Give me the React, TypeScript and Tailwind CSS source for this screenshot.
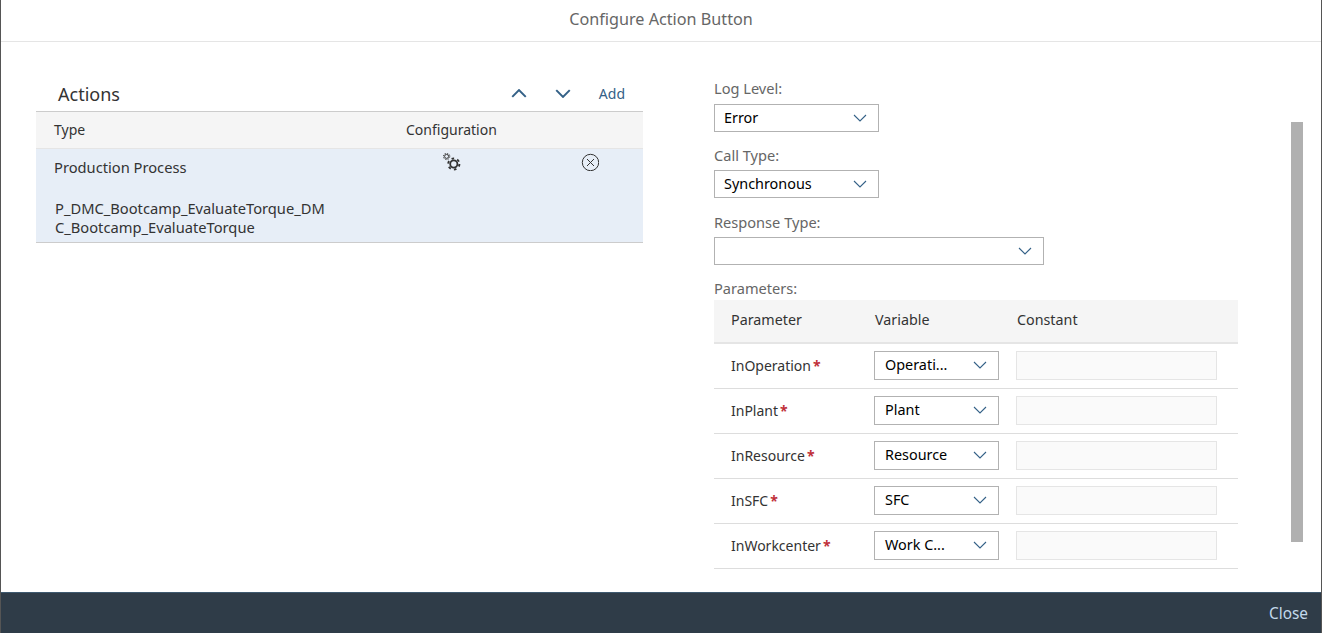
const font = "font-['Noto_Sans',sans-serif]";

type Param = { name: string; variable: string };

const params: Param[] = [
  { name: "InOperation", variable: "Operati..." },
  { name: "InPlant", variable: "Plant" },
  { name: "InResource", variable: "Resource" },
  { name: "InSFC", variable: "SFC" },
  { name: "InWorkcenter", variable: "Work C..." },
];

function Chevron({ className, weight = 1.1 }: { className: string; weight?: number }) {
  return (
    <svg viewBox="0 0 14 8" fill="none" className={className}>
      <path d="M1 1l6 6 6-6" stroke="currentColor" strokeWidth={weight} />
    </svg>
  );
}

function SelectBox({ value, width, height = "h-7", pad = "pl-[9px]" }: { value: string; width: string; height?: string; pad?: string }) {
  return (
    <div className={`flex ${height} ${width} ${pad} items-center justify-between border border-[#b2b2b2] bg-white pr-[11px] text-[14.4px] text-black`}>
      <span>{value}</span>
      <Chevron className="h-2 w-3.5 text-[#346187]" />
    </div>
  );
}

function Gears() {
  return (
    <svg viewBox="0 0 18 18" fill="none" className="h-[18px] w-[18px] text-[#333]">
      <circle cx="3.6" cy="3.4" r="2" stroke="currentColor" strokeWidth="1" />
      <circle cx="3.6" cy="3.4" r="3.2" stroke="currentColor" strokeWidth="1" strokeDasharray="1.26 1.25" />
      <circle cx="10.8" cy="11" r="3.6" stroke="currentColor" strokeWidth="1.8" />
      <circle cx="10.8" cy="11" r="5.6" stroke="currentColor" strokeWidth="1.9" strokeDasharray="2.6 3.26" />
    </svg>
  );
}

function FieldLabel({ children }: { children: string }) {
  return <div className="text-[14.6px] leading-5 text-[#666]">{children}</div>;
}

export default function App() {
  return (
    <div className={`${font} flex h-[633px] w-[1322px] flex-col overflow-hidden border-x border-[#555] bg-white`}>
      <header className="flex h-[42px] shrink-0 items-center justify-center border-b border-[#e5e5e5] pb-[3px] text-[16.2px] text-[#666]">
        Configure Action Button
      </header>

      <main className="flex min-h-0 flex-1">
        <section className="ml-[35px] mt-[36px] w-[607px] shrink-0">
          <div className="flex h-[33px] items-center justify-between pb-0.5 pl-[22px] pr-[18px]">
            <h2 className="text-lg leading-6 text-[#333]">Actions</h2>
            <div className="flex items-center text-[#346187]">
              <Chevron className="h-[9px] w-4 rotate-180" weight={1.8} />
              <Chevron className="ml-[28px] h-[9px] w-4" weight={1.8} />
              <span className="ml-[28px] text-sm">Add</span>
            </div>
          </div>
          <div className="flex h-[38px] items-center border-y border-[#cccccc] border-b-[#e5e5e5] bg-[#f5f5f5] text-sm text-[#333]">
            <span className="ml-[18px] w-[352px]">Type</span>
            <span>Configuration</span>
          </div>
          <div className="relative h-[94px] border-b border-[#cccccc] bg-[#e7eef7] text-[14.7px] text-[#333]">
            <div className="pl-[18px] pt-[8px] leading-5">Production Process</div>
            <div className="w-[295px] break-all pl-[19px] pt-[22px] leading-[19px]">
              P_DMC_Bootcamp_EvaluateTorque_DMC_Bootcamp_EvaluateTorque
            </div>
            <div className="absolute left-[407px] top-[4px]">
              <Gears />
            </div>
            <svg viewBox="0 0 18 18" fill="none" className="absolute left-[545px] top-[4px] h-[18px] w-[18px] text-[#333]">
              <circle cx="9.5" cy="9.5" r="8.2" stroke="currentColor" strokeWidth="1" />
              <path d="M6 6l7 7M13 6l-7 7" stroke="currentColor" strokeWidth="1" />
            </svg>
          </div>
        </section>

        <section className="ml-[71px] mt-[36px] w-[524px] shrink-0">
          <FieldLabel>Log Level:</FieldLabel>
          <div className="mt-[6px]">
            <SelectBox value="Error" width="w-[165px]" />
          </div>
          <div className="mt-[13px]">
            <FieldLabel>Call Type:</FieldLabel>
          </div>
          <div className="mt-[5px]">
            <SelectBox value="Synchronous" width="w-[165px]" />
          </div>
          <div className="mt-[14px]">
            <FieldLabel>Response Type:</FieldLabel>
          </div>
          <div className="mt-[5px]">
            <SelectBox value="" width="w-[330px]" />
          </div>
          <div className="mt-[13px]">
            <FieldLabel>Parameters:</FieldLabel>
          </div>
          <div className="mt-[2px] flex h-[44px] items-center border-b-2 border-[#e5e5e5] bg-[#f5f5f5] pb-[2px] text-[14.3px] text-[#333]">
            <span className="ml-[17px] w-[144px]">Parameter</span>
            <span className="w-[142px]">Variable</span>
            <span>Constant</span>
          </div>
          {params.map((p) => (
            <div key={p.name} className="flex h-[45px] items-center border-b border-[#dddddd] pb-[2px] text-sm text-[#333]">
              <div className="ml-[17px] w-[143px] pt-[2px]">
                {p.name}
                <span className="ml-0.5 font-bold text-[#c0303a]">*</span>
              </div>
              <SelectBox value={p.variable} width="w-[125px]" height="h-[29px]" pad="pl-[10px]" />
              <div className="ml-[17px] h-[29px] w-[201px] border border-[#e5e5e5] bg-[#fafafa]" />
            </div>
          ))}
        </section>

        <div className="ml-[53px] mt-[80px] h-[420px] w-3 shrink-0 bg-[#b0b0b0]" />
      </main>

      <footer className="flex h-[41px] shrink-0 items-center justify-end border-t border-[#3f5a70] bg-[#2f3c48] pr-[13px] pt-[1px] text-[15.4px] text-[#c3d9ec]">
        Close
      </footer>
    </div>
  );
}
